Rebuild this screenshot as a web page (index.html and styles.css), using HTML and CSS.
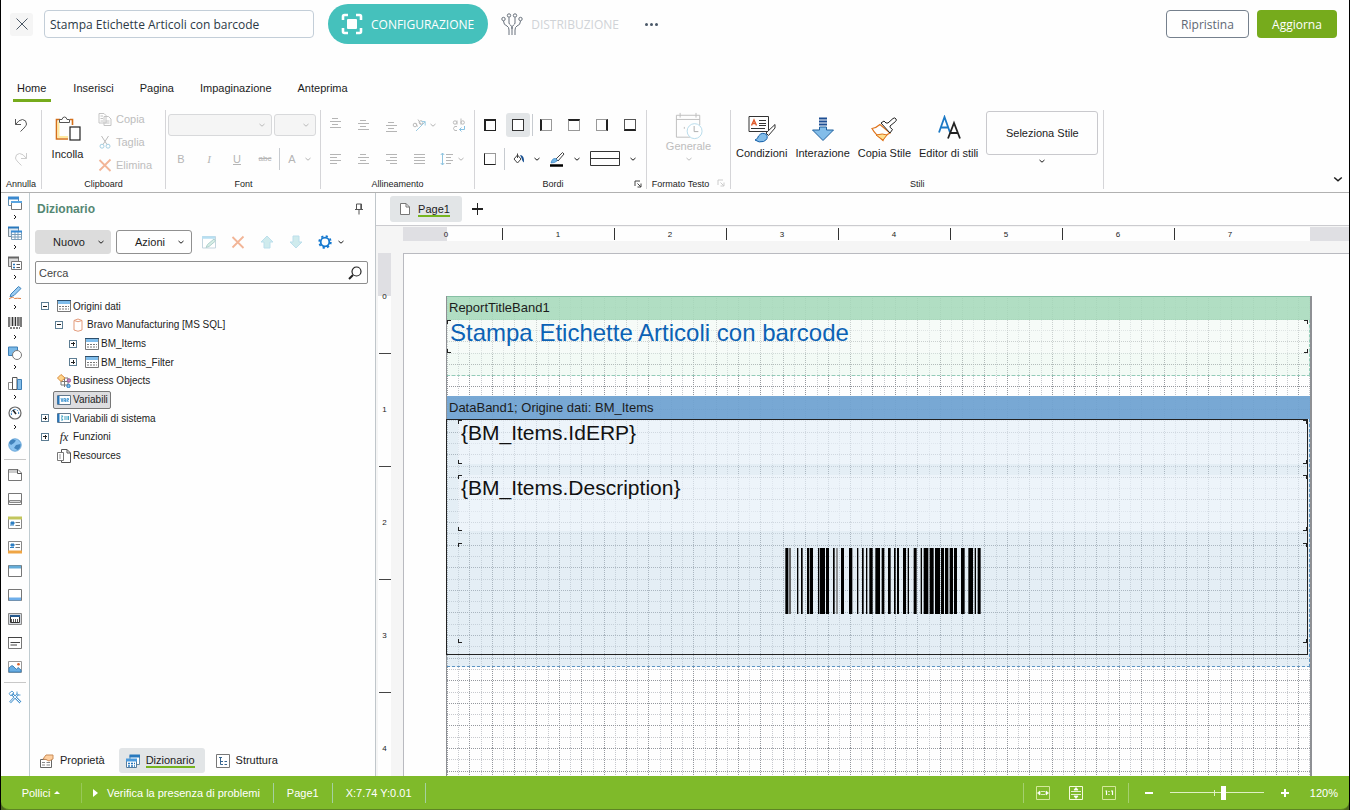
FILE: index.html
```
<!DOCTYPE html>
<html lang="it">
    <head>
        <meta charset="UTF-8">
        <meta name="viewport" content="width=device-width, initial-scale=1.0">
        <title>Stampa Etichette Articoli con barcode</title>
        <link rel="stylesheet" href="styles.css">
    </head>
    <body>

        <!-- icons -->
        <svg class="sprite" aria-hidden="true">
            <symbol id="chev" viewBox="0 0 8 8"><path d="M1.500 3L4 5.200L6.500 3" fill="none" stroke="currentColor"/></symbol>
            <symbol id="chev-right" viewBox="0 0 8 8"><path d="M3 2L5 4L3 6" fill="none" stroke="currentColor"/></symbol>
            <symbol id="close" viewBox="0 0 12 12"><path d="M.5 .5L11.5 11.5M11.5 .5L.5 11.5" stroke="#4c5866" fill="none"/></symbol>
            <symbol id="target" viewBox="0 0 22 22"><path d="M2 7V3.500Q2 2 3.500 2H7M15 2H18.500Q20 2 20 3.500V7M20 15V18.500Q20 20 18.500 20H15M7 20H3.500Q2 20 2 18.500V15" fill="none" stroke="#fff" stroke-width="2.600"/><rect x="6" y="6" width="10" height="10" rx="1" fill="#fff"/></symbol>
            <symbol id="nodes" viewBox="0 0 22 22"><g fill="none" stroke="#68717c"><circle cx="2.500" cy="6" r="1.700"/><circle cx="8" cy="2.500" r="1.700"/><circle cx="14" cy="2.500" r="1.700"/><circle cx="19.500" cy="6" r="1.700"/><path d="M2.500 8Q2.500 12 6 13Q8 14 8 17V22M8 4.500V10Q8 11 9.500 12Q11 13 11 16V22M14 4.500V10Q14 11 12.500 12Q11 13 11 16M19.500 8Q19.500 12 16 13Q14 14 14 17V22"/></g></symbol>
            <symbol id="undo" viewBox="0 0 16 16"><path d="M2.500 2V7.500H8M2.500 7.500Q6 2.500 9.500 2.500Q13.500 3 13.500 7Q13.500 9 7.500 14.500" fill="none" stroke="#555"/></symbol>
            <symbol id="redo" viewBox="0 0 16 16"><path d="M13.500 2V7.500H8M13.500 7.500Q10 2.500 6.500 2.500Q2.500 3 2.500 7Q2.500 9 8.500 14.500" fill="none" stroke="#ccc"/></symbol>
            <symbol id="paste" viewBox="0 0 28 28"><path d="M6 4.500H2.500V24H14M16 4.500H18.500V10" fill="none" stroke="#d5701a" stroke-width="1.600"/><path d="M4.500 6.500V22H14" fill="none" stroke="#ffe9a0" stroke-width="2"/><path d="M5.500 7.500V4.500H8Q8.500 2 10.500 2Q12.500 2 13 4.500H15.500V7.500Z" fill="#fff" stroke="#555"/><rect x="16" y="12" width="10" height="13" fill="#fff" stroke="#222" stroke-width="1.200"/></symbol>
            <symbol id="copy" viewBox="0 0 14 14"><path d="M1 1.500H6L8 3.500V11H1ZM6 4.500H10.500L13 7V13.500H6Z" fill="#fff" stroke="#c4c4c4"/><path d="M2.500 4H5M2.500 6.500H5M2.500 9H5M7.500 9H11.500M7.500 11H11.500" stroke="#c4c4c4"/></symbol>
            <symbol id="cut" viewBox="0 0 14 14"><path d="M3.500 1L9 9.500M10.500 1L5 9.500" stroke="#bbb" fill="none"/><circle cx="4" cy="11.200" r="2" fill="none" stroke="#a5cfe2"/><circle cx="10" cy="11.200" r="2" fill="none" stroke="#a5cfe2"/></symbol>
            <symbol id="delete" viewBox="0 0 14 14"><path d="M1.500 2L12.500 13M12.500 1.500L1.500 12.500" stroke="#f2b597" stroke-width="1.800" fill="none"/></symbol>
            <symbol id="lines-c" viewBox="0 0 12 12"><path d="M3 1.500H9M1 4.500H12M3 7.500H9M1 10.500H12" stroke="#b5b5b5"/></symbol>
            <symbol id="lines-l" viewBox="0 0 12 12"><path d="M1 1.500H12M1 4.500H8M1 7.500H12M1 10.500H8" stroke="#b5b5b5"/></symbol>
            <symbol id="lines-r" viewBox="0 0 12 12"><path d="M1 1.500H12M5 4.500H12M1 7.500H12M5 10.500H12" stroke="#b5b5b5"/></symbol>
            <symbol id="lines-j" viewBox="0 0 12 12"><path d="M1 1.500H12M1 4.500H12M1 7.500H12M1 10.500H12" stroke="#b5b5b5"/></symbol>
            <symbol id="angle" viewBox="0 0 14 14"><g fill="none" stroke="#bbb"><circle cx="3" cy="7" r="1.800"/><path d="M5.500 8.500L3.500 5M6 1.500L9 6.500"/><circle cx="9" cy="4.500" r="1.800"/></g><path d="M4 13L13 4M9.500 3.500H13.200V7.500" fill="none" stroke="#9ccbe2"/></symbol>
            <symbol id="spacing" viewBox="0 0 14 14"><path d="M6 2.500H13M6 5.500H11M6 8.500H13M6 11.500H11" stroke="#b5b5b5"/><path d="M2.500 1V13M.8 3L2.500 1L4.200 3M.8 11L2.500 13L4.200 11" fill="none" stroke="#8fc4e0"/></symbol>
            <symbol id="wrap" viewBox="0 0 14 14"><g fill="none" stroke="#bbb"><circle cx="3" cy="4.500" r="1.700"/><path d="M5 2.500V6.500M9 .5V6.500M5 8.500Q2 7.500 1.500 10.500Q2 13.500 5 12.500"/><circle cx="10.700" cy="4.500" r="1.700"/></g><path d="M12.500 8V11.500H7.500M9.500 9.500L7.500 11.500L9.500 13.500" fill="none" stroke="#86c1e2"/></symbol>
            <symbol id="bucket" viewBox="0 0 14 14"><path d="M5.500 1.500V6M5.500 3L2 7L5.500 11L9 7Z" fill="#fff" stroke="#444"/><path d="M8 3Q12.500 3 12 10.500Q10 9 9.500 6Z" fill="#174f91"/></symbol>
            <symbol id="pen" viewBox="0 0 16 16"><path d="M7 8L13.500 1.500L15 3L9 10Z" fill="#fff" stroke="#444"/><path d="M2 12Q3 7 6.500 7.500Q9 8.500 8 10Q6 12 2 12Z" fill="#72b5e6" stroke="#2677bd" stroke-width=".6"/><path d="M1 14.500H14" stroke="#000" stroke-width="2.500"/></symbol>
            <symbol id="linestyle" viewBox="0 0 32 18"><path d="M1.500 1.500H30.500V15.500H1.500ZM1 8.500H31" fill="none" stroke="#333"/></symbol>
            <symbol id="launcher" viewBox="0 0 8 8"><path d="M1 6V1H6M3.500 3.500L7 7M7 3.500V7H3.500" fill="none" stroke="currentColor"/></symbol>
            <symbol id="calendar" viewBox="0 0 30 30"><path d="M16 27H1.500V3.500H26.500V14M1.500 8H26.500M5.500 1V6M22.500 1V6" fill="none" stroke="#bcbcbc"/><path d="M10 16V18" stroke="#bbb"/><circle cx="21" cy="20.500" r="8" fill="#fff" stroke="#b4d9ea"/><path d="M20.500 15V21H25" fill="none" stroke="#aaa"/></symbol>
            <symbol id="cond" viewBox="0 0 28 28"><path d="M1 1.500H20.500V16.500H1Z" fill="#fff" stroke="#333"/><path d="M3.500 10.500L6 5L8.500 10.500M4.500 8.500H7.500" fill="none" stroke="#e05b2c" stroke-width="1.400"/><path d="M11 5.500H18M11 8.500H18M11 10.500H18M3 13.500H17" stroke="#333"/><path d="M18 18L27 9.500V13L20.500 20.500Z" fill="#fff" stroke="#333"/><path d="M7 25Q10 24 10.500 21Q14 16.500 18.500 19.500Q21 24 15.500 26.500Q11 28 7 25Z" fill="#83bde9" stroke="#155fa8"/></symbol>
            <symbol id="interact" viewBox="0 0 28 28"><path d="M10 3.500H18M10 6.500H18M10 9.500H18" stroke="#1d4e93" stroke-width="1.800"/><path d="M10.500 12H17.500V15H24.500L14 25.500L3.500 15H10.500Z" fill="#83bde9" stroke="#21629f"/></symbol>
            <symbol id="brush" viewBox="0 0 28 28"><path d="M10 9.500Q6 13 2 13.500Q5 19 13 25.500Q15 20 20 18Z" fill="#fff" stroke="#df741d" stroke-width="1.200"/><path d="M6 20Q13 18 17 20L13 25Z" fill="#ffdf91" stroke="#df741d"/><path d="M11 8L14 6Q16 9 18 8L23 3.500Q25 2 26 4Q27 5 25.500 6.500L20 11Q19 12 22.500 14.500L20 18Z" fill="#fff" stroke="#222"/></symbol>
            <symbol id="styles" viewBox="0 0 28 28"><path d="M4 17.500L9.500 2L15 17.500M6 12.500H13" fill="none" stroke="#1c79c5" stroke-width="1.800"/><path d="M13 23.500L19 8L25 23.500M15 18H23" fill="none" stroke="#222" stroke-width="1.800"/></symbol>
            <symbol id="pin" viewBox="0 0 10 12"><path d="M2.500 1H7.500V6.500H2.500ZM1 6.500H9M5 6.500V11.500" fill="none" stroke="#555"/><path d="M6.800 1V6" stroke="#555"/></symbol>
            <symbol id="edit" viewBox="0 0 14 14"><path d="M.5 1.500H13.500V13H.5Z" fill="#fff" stroke="#c5d5df"/><path d="M0 2.500H13" stroke="#b7dff2" stroke-width="2.500"/><path d="M4 12.500L5.500 9.500L12 4L13.500 6L7 11.500Z" fill="#d8eee6" stroke="#afd0cd"/></symbol>
            <symbol id="up" viewBox="0 0 14 14"><path d="M7 1L13 7H10V13H4V7H1Z" fill="#cfebed" stroke="#bcdfec"/></symbol>
            <symbol id="down" viewBox="0 0 14 14"><path d="M7 13L13 7H10V1H4V7H1Z" fill="#cfebed" stroke="#bcdfec"/></symbol>
            <symbol id="gear" viewBox="0 0 14 14"><circle cx="7" cy="7" r="4.300" fill="none" stroke="#1478cf" stroke-width="1.800"/><circle cx="7" cy="7" r="5.800" fill="none" stroke="#1478cf" stroke-width="1.800" stroke-dasharray="2.200 2.355"/></symbol>
            <symbol id="search" viewBox="0 0 14 14"><circle cx="8.500" cy="5.500" r="4.500" fill="none" stroke="#222" stroke-width="1.200"/><path d="M5 9L1 13" stroke="#222" stroke-width="2"/></symbol>

            <symbol id="windows" viewBox="0 0 14 14"><path d="M.5 1.500H10.500V9.500H.5Z" fill="#fff" stroke="#628cac"/><path d="M0 2H11" stroke="#3b89cf" stroke-width="3"/><path d="M3.500 5.500H13.500V13.500H3.500Z" fill="#fff" stroke="#777"/><path d="M3 6H14" stroke="#5aa5e0" stroke-width="2"/></symbol>
            <symbol id="tables" viewBox="0 0 14 14"><path d="M.5 1.500H10.500V10.500H.5Z" fill="#dde8f2" stroke="#7d8b95"/><path d="M0 1.500H11" stroke="#2878bd" stroke-width="2"/><path d="M3.500 5.500H13.500V13.500H3.500ZM4 8.500H13M4 11H13M7 6V13M10 6V13" fill="#fff" stroke="#7b9eb9"/><path d="M3 5.500H14" stroke="#378bd4" stroke-width="2"/></symbol>
            <symbol id="cards" viewBox="0 0 14 14"><path d="M.5 1.500H10.500V10.500H.5Z" fill="#ddd" stroke="#777"/><path d="M0 1.500H11" stroke="#666" stroke-width="2"/><path d="M3.500 5.500H13.500V13.500H3.500Z" fill="#fff" stroke="#777"/><path d="M5 8.500H7M5 11.500H7" stroke="#2677bd" stroke-width="1.500"/><path d="M8.500 8.500H12M8.500 11.500H12" stroke="#555"/></symbol>
            <symbol id="sign" viewBox="0 0 14 14"><path d="M3 8L10.500 .5L13 2.500L6 9.500L2 11Z" fill="#9cccf0" stroke="#3e83bc"/><path d="M1 13Q5 10 6.500 12.500Q9 12 13 12.500" stroke="#e08145" fill="none"/></symbol>
            <symbol id="bars" viewBox="0 0 14 14"><path d="M1 1V11M4.500 1V10M7.500 1V10M10 1V10M13 1V11" stroke="#333" stroke-width="1.300"/><path d="M3 1V10M6 1V10M11.500 1V10" stroke="#999"/><path d="M2 12H12" stroke="#555" stroke-width="1.500" stroke-dasharray="2 1"/></symbol>
            <symbol id="shapes" viewBox="0 0 14 14"><path d="M.5 1H9.500V9.500H.5Z" fill="#79b8e7" stroke="#3d7eb5"/><circle cx="9" cy="9" r="4.500" fill="#fff" stroke="#777"/></symbol>
            <symbol id="chart" viewBox="0 0 14 14"><path d="M.5 6.500H4.500V13.500H.5Z" fill="#fff" stroke="#888"/><path d="M4.500 1.500H9V13.500H4.500Z" fill="#fff" stroke="#555"/><path d="M9.500 3.500H13.500V13.500H9.500Z" fill="#83bde9" stroke="#3d7eb5"/></symbol>
            <symbol id="gauge" viewBox="0 0 14 14"><circle cx="7" cy="7" r="6" fill="#fff" stroke="#666" stroke-width="1.200"/><path d="M3.500 9Q2.500 4 7 3.500Q11.500 4 10.500 9" fill="none" stroke="#2878bd" stroke-dasharray="2 1"/><path d="M5 4L8 8" stroke="#222" stroke-width="1.500"/></symbol>
            <symbol id="globe" viewBox="0 0 14 14"><circle cx="7" cy="7" r="6.200" fill="#8cc4f0" stroke="#6aa6d8"/><path d="M1 5Q2 2 5 1.200L8 2.500L6 5L3 7ZM8 7L12.500 6Q13 10 9.500 12L6 10Z" fill="#4183bc"/></symbol>
            <symbol id="page-band" viewBox="0 0 14 14"><path d="M.5 1.500H10L13.500 5V12.500H.5Z" fill="#fff" stroke="#777"/><path d="M1 2H9V5H1Z" fill="#ccc"/><path d="M9.500 1.500V5.500H13.500" fill="none" stroke="#555"/></symbol>
            <symbol id="foot-band" viewBox="0 0 14 14"><path d="M.5 1.500H13.500V12.500H.5Z" fill="#fff" stroke="#777"/><path d="M1.500 8.500H12.500V10.500H1.500Z" fill="#ddd" stroke="#888"/></symbol>
            <symbol id="head-card" viewBox="0 0 14 14"><path d="M.5 1.500H13.500V12.500H.5Z" fill="#fff" stroke="#888"/><path d="M0 2H14" stroke="#c2c65d" stroke-width="3"/><path d="M3 6H6V8H3ZM2 9H6" fill="#2d7fc3" stroke="#2d7fc3"/><path d="M7.500 6.500H12M7.500 9.500H12" stroke="#777"/></symbol>
            <symbol id="foot-card" viewBox="0 0 14 14"><path d="M.5 1.500H13.500V12.500H.5Z" fill="#fff" stroke="#888"/><path d="M0 12H14" stroke="#efa544" stroke-width="3"/><path d="M3 4H6V6H3ZM2 7.500H6" fill="#2d7fc3" stroke="#2d7fc3"/><path d="M7.500 4.500H12M7.500 7.500H12" stroke="#777"/></symbol>
            <symbol id="top-band" viewBox="0 0 14 14"><path d="M.5 1.500H13.500V12.500H.5Z" fill="#fff" stroke="#777"/><path d="M1 3H13" stroke="#64acd8" stroke-width="3"/></symbol>
            <symbol id="bottom-band" viewBox="0 0 14 14"><path d="M.5 1.500H13.500V12.500H.5Z" fill="#fff" stroke="#777"/><path d="M1 11H13" stroke="#6eaeea" stroke-width="3"/></symbol>
            <symbol id="grid-band" viewBox="0 0 14 14"><path d="M.5 1.500H13.500V12.500H.5Z" fill="#d5d9de" stroke="#888"/><path d="M2.500 3.500H11.500V10.500H2.500Z" fill="#fff" stroke="#333"/><path d="M2 4H12" stroke="#25598d" stroke-width="2"/><path d="M3 8.500H11" stroke="#555" stroke-width="3" stroke-dasharray="1 1"/></symbol>
            <symbol id="text-band" viewBox="0 0 14 14"><path d="M.5 1.500H13.500V12.500H.5Z" fill="#fff" stroke="#777"/><path d="M0 1.500H14M2.500 6.500H12M2.500 9H9" stroke="#444"/></symbol>
            <symbol id="picture" viewBox="0 0 14 14"><path d="M.5 1.500H13.500V12.500H.5Z" fill="#fff" stroke="#999"/><path d="M1 12V8Q4 4 6 7L8.500 9.500L10 7.500L13 10V12Z" fill="#69aee3" stroke="#3f83ba"/><circle cx="10.500" cy="4.200" r="1.300" fill="#d6612d"/></symbol>
            <symbol id="tools" viewBox="0 0 14 14"><path d="M2 12.500L10 4M12.500 12.500L4 4" stroke="#4b94cd" stroke-width="2.500" fill="none"/><path d="M2 12.500L10 4M12.500 12.500L4 4" stroke="#fff" fill="none"/><path d="M9 1.500V5H12.500M1 3.500L4 1L6 3L3 6Z" fill="none" stroke="#5da1d4"/></symbol>

            <symbol id="table" viewBox="0 0 14 14"><path d="M.5 1.500H13.500V12.500H.5Z" fill="#fff" stroke="#777"/><path d="M0 1.500H14" stroke="#2b4f6e"/><path d="M1 3.500H13" stroke="#7fbdec" stroke-width="3"/><path d="M2 7.500H12M2 10H12" stroke="#777" stroke-dasharray="2 1"/></symbol>
            <symbol id="db" viewBox="0 0 14 14"><path d="M3 2.500V12Q7 14.500 11 12V2.500Q7 -.5 3 2.500Q7 5 11 2.500" fill="#fff" stroke="#e39b7b"/></symbol>
            <symbol id="objects" viewBox="0 0 14 14"><path d="M4 4H11V11H4ZM4 7.500H13M7.500 4V13" fill="none" stroke="#777"/><path d="M4 .5L8 4L4 7.500L.5 4Z" fill="#ffd58c" stroke="#d98b3d"/><circle cx="12" cy="6.500" r="1.700" fill="#cc8bc8" stroke="#9b5a9b"/><circle cx="11.500" cy="12" r="1.700" fill="#83bde9" stroke="#2d7fc3"/></symbol>
            <symbol id="var" viewBox="0 0 14 14"><path d="M.5 2.500H13.500V11.500H.5Z" fill="#fff" stroke="#63798d"/><path d="M1.500 3V11" stroke="#2677bd" stroke-width="2"/><path d="M4 5L5 9L6 5M7 9V5.500H8.500V9M7 7.500H8.500M10 9V5.500H11.500V7H10L11.500 9" fill="none" stroke="#55a0d5"/></symbol>
            <symbol id="sysvar" viewBox="0 0 14 14"><path d="M.5 2.500H13.500V11.500H.5Z" fill="#fff" stroke="#63798d"/><path d="M1.500 3V11" stroke="#2677bd" stroke-width="2"/><path d="M4 5H6L4.500 7L6 9H4M8 5V9M10 5V9M11.500 5V9" fill="none" stroke="#42a3c3"/></symbol>
            <symbol id="res" viewBox="0 0 14 14"><path d="M4.500 .5H10L13.500 4V13.500H4.500Z" fill="#fff" stroke="#555"/><path d="M10 .5V4H13.500" fill="none" stroke="#555"/><path d="M.5 3.500H6.500V11.500H.5Z" fill="#fff" stroke="#777"/><path d="M3 5V10" stroke="#999"/></symbol>
            <symbol id="props" viewBox="0 0 14 14"><path d="M.5 5.500H11.500V13.500H.5Z" fill="#fff" stroke="#666"/><path d="M2 8.500H5M2 11H5M6.500 8.500H10M6.500 11H10" stroke="#888"/><path d="M3 5L6 1H13V5L9 7L6 5.500Z" fill="#ffd0a0" stroke="#c98c58"/></symbol>
            <symbol id="dict" viewBox="0 0 14 14"><path d="M4 1.500H13.500V10.500H4Z" fill="#fff" stroke="#628cac"/><path d="M3.500 2H14" stroke="#2878bd" stroke-width="3"/><path d="M.5 5.500H10.500V13.500H.5Z" fill="#fff" stroke="#557c9c"/><path d="M0 6H11" stroke="#4a9add" stroke-width="3"/><path d="M2 9.500H9M2 12H9" stroke="#2878bd" stroke-width="1.500" stroke-dasharray="2 1"/></symbol>
            <symbol id="struct" viewBox="0 0 14 14"><path d="M.5 .5H13.500V13.500H.5Z" fill="#fff" stroke="#777"/><path d="M3 3.500H6M4.500 4V10.500H7M4.500 7.500H7M8.500 7.500H11M8.500 10.500H11" fill="none" stroke="#36658f"/></symbol>
            <symbol id="page" viewBox="0 0 12 14"><path d="M1.500 1.500H7L10.500 5V12.500H1.500Z" fill="#fff" stroke="#777"/><path d="M7 1.500V5H10.500" fill="none" stroke="#777"/></symbol>
            <symbol id="fit-width" viewBox="0 0 14 14"><path d="M.5 .5H13.500V13.500H.5Z" fill="none" stroke="#d3e89b"/><path d="M5 5.500H9M5 8.500H9M1.500 7L4 5V9ZM12.500 7L10 5V9Z" fill="#fff" stroke="#fff" stroke-width=".7"/></symbol>
            <symbol id="fit-page" viewBox="0 0 14 14"><path d="M.5 .5H13.500V13.500H.5Z" fill="none" stroke="#f5fbdc"/><path d="M2 5.500H12M2 8.500H12M7 1.500L9 4H5ZM7 12.500L9 10H5Z" fill="#fff" stroke="#fff" stroke-width=".8"/></symbol>
            <symbol id="fit-one" viewBox="0 0 14 14"><path d="M.5 .5H13.500V13.500H.5Z" fill="none" stroke="#d3e89b"/><path d="M3.500 5H4.500V9M7 5V6M7 8V9M9 5H10.500V9" fill="none" stroke="#fff" stroke-width="1.200"/></symbol>
        </svg>

        <header class="topbar">
            <button class="close-button" aria-label="Chiudi"><svg><use href="#close"/></svg></button>
            <input class="report-name" type="text" aria-label="Nome report" value="Stampa Etichette Articoli con barcode">
            <button class="step step-active"><svg><use href="#target"/></svg>CONFIGURAZIONE</button>
            <button class="step"><svg><use href="#nodes"/></svg>DISTRIBUZIONE</button>
            <button class="more" aria-label="Altro"><i></i><i></i><i></i></button>
            <div class="top-actions">
                <button class="outline-button">Ripristina</button>
                <button class="green-button">Aggiorna</button>
            </div>
        </header>

        <nav class="ribbon-tabs">
            <a class="active" href="#home">Home</a>
            <a href="#inserisci">Inserisci</a>
            <a href="#pagina">Pagina</a>
            <a href="#impaginazione">Impaginazione</a>
            <a href="#anteprima">Anteprima</a>
        </nav>

        <section class="ribbon">
            <div class="group group-undo">
                <div class="group-body rows">
                    <div class="row"><button class="cell" aria-label="Annulla"><svg class="ic16"><use href="#undo"/></svg></button></div>
                    <div class="row"><button class="cell" aria-label="Ripeti"><svg class="ic16"><use href="#redo"/></svg></button></div>
                </div>
                <div class="group-label">Annulla</div>
            </div>
            <div class="group group-clip">
                <div class="group-body">
                    <button class="big big-paste"><svg><use href="#paste"/></svg>Incolla</button>
                    <div class="clip-list">
                        <button><svg><use href="#copy"/></svg>Copia</button>
                        <button><svg><use href="#cut"/></svg>Taglia</button>
                        <button><svg><use href="#delete"/></svg>Elimina</button>
                    </div>
                </div>
                <div class="group-label">Clipboard</div>
            </div>
            <div class="group group-font">
                <div class="group-body rows">
                    <div class="row font-selects">
                        <select class="font-name" aria-label="Carattere" disabled></select>
                        <select class="font-size" aria-label="Dimensione" disabled></select>
                    </div>
                    <div class="row disabled">
                        <button class="cell">B</button>
                        <button class="cell italic">I</button>
                        <button class="cell underline">U</button>
                        <button class="cell strike">abc</button>
                        <span class="sep"></span>
                        <button class="cell narrow" aria-label="Colore testo">A</button>
                        <svg class="chev"><use href="#chev"/></svg>
                    </div>
                </div>
                <div class="group-label">Font</div>
            </div>
            <div class="group group-align">
                <div class="group-body rows">
                    <div class="row disabled">
                        <button class="cell cell-top" aria-label="In alto"><svg class="ic12"><use href="#lines-c"/></svg></button>
                        <button class="cell" aria-label="Al centro"><svg class="ic12"><use href="#lines-c"/></svg></button>
                        <button class="cell cell-bottom" aria-label="In basso"><svg class="ic12"><use href="#lines-c"/></svg></button>
                        <button class="cell" aria-label="Angolo"><svg class="ic14"><use href="#angle"/></svg></button>
                        <svg class="chev tight"><use href="#chev"/></svg>
                        <button class="cell cell-end" aria-label="A capo"><svg class="ic14"><use href="#wrap"/></svg></button>
                    </div>
                    <div class="row disabled">
                        <button class="cell" aria-label="Sinistra"><svg class="ic12"><use href="#lines-l"/></svg></button>
                        <button class="cell" aria-label="Centro"><svg class="ic12"><use href="#lines-c"/></svg></button>
                        <button class="cell" aria-label="Destra"><svg class="ic12"><use href="#lines-r"/></svg></button>
                        <button class="cell" aria-label="Giustifica"><svg class="ic12"><use href="#lines-j"/></svg></button>
                        <button class="cell" aria-label="Interlinea"><svg class="ic14"><use href="#spacing"/></svg></button>
                        <svg class="chev tight"><use href="#chev"/></svg>
                    </div>
                </div>
                <div class="group-label">Allineamento</div>
            </div>
            <div class="group group-border">
                <div class="group-body rows">
                    <div class="row">
                        <button class="cell" aria-label="Tutti"><i class="box all"></i></button>
                        <button class="cell selected" aria-label="Nessuno"><i class="box none"></i></button>
                        <button class="cell divided" aria-label="Sinistro"><i class="box left"></i></button>
                        <button class="cell" aria-label="Superiore"><i class="box top"></i></button>
                        <button class="cell" aria-label="Destro"><i class="box right"></i></button>
                        <button class="cell" aria-label="Inferiore"><i class="box bottom"></i></button>
                    </div>
                    <div class="row">
                        <button class="cell" aria-label="Ombra"><i class="box shadow"></i></button>
                        <span class="sep"></span>
                        <button class="cell" aria-label="Riempimento"><svg class="ic14"><use href="#bucket"/></svg></button>
                        <svg class="chev"><use href="#chev"/></svg>
                        <button class="cell cell-pen" aria-label="Colore bordo"><svg class="ic16"><use href="#pen"/></svg></button>
                        <svg class="chev"><use href="#chev"/></svg>
                        <button class="cell cell-line" aria-label="Stile bordo"><svg><use href="#linestyle"/></svg></button>
                        <svg class="chev"><use href="#chev"/></svg>
                    </div>
                </div>
                <div class="group-label">Bordi<svg class="launcher"><use href="#launcher"/></svg></div>
            </div>
            <div class="group group-format">
                <div class="group-body">
                    <button class="big big-format"><svg><use href="#calendar"/></svg>Generale<svg class="chev"><use href="#chev"/></svg></button>
                </div>
                <div class="group-label with-launcher">Formato Testo<svg class="launcher off"><use href="#launcher"/></svg></div>
            </div>
            <div class="group group-styles">
                <div class="group-body">
                    <button class="big"><svg><use href="#cond"/></svg>Condizioni</button>
                    <button class="big"><svg><use href="#interact"/></svg>Interazione</button>
                    <button class="big"><svg><use href="#brush"/></svg>Copia Stile</button>
                    <button class="big"><svg><use href="#styles"/></svg>Editor di stili</button>
                    <div class="style-pick">
                        <button class="style-box">Seleziona Stile</button>
                        <svg class="chev"><use href="#chev"/></svg>
                    </div>
                </div>
                <div class="group-label">Stili</div>
            </div>
            <button class="collapse" aria-label="Comprimi"><svg><use href="#chev"/></svg></button>
        </section>

        <main class="workspace">
            <aside class="toolbox">
                <button class="tool more-tool" aria-label="Bande"><svg><use href="#windows"/></svg><svg class="chev"><use href="#chev-right"/></svg></button>
                <button class="tool more-tool" aria-label="Tabelle"><svg><use href="#tables"/></svg><svg class="chev"><use href="#chev-right"/></svg></button>
                <button class="tool more-tool" aria-label="Componenti"><svg><use href="#cards"/></svg><svg class="chev"><use href="#chev-right"/></svg></button>
                <button class="tool more-tool" aria-label="Firme"><svg><use href="#sign"/></svg><svg class="chev"><use href="#chev-right"/></svg></button>
                <button class="tool more-tool" aria-label="Codici a barre"><svg><use href="#bars"/></svg><svg class="chev"><use href="#chev-right"/></svg></button>
                <button class="tool more-tool" aria-label="Forme"><svg><use href="#shapes"/></svg><svg class="chev"><use href="#chev-right"/></svg></button>
                <button class="tool more-tool" aria-label="Grafici"><svg><use href="#chart"/></svg><svg class="chev"><use href="#chev-right"/></svg></button>
                <button class="tool more-tool" aria-label="Indicatori"><svg><use href="#gauge"/></svg><svg class="chev"><use href="#chev-right"/></svg></button>
                <button class="tool tool-map" aria-label="Mappe"><svg><use href="#globe"/></svg></button>
                <hr>
                <button class="tool" aria-label="Titolo report"><svg><use href="#page-band"/></svg></button>
                <button class="tool" aria-label="Riepilogo"><svg><use href="#foot-band"/></svg></button>
                <button class="tool" aria-label="Intestazione pagina"><svg><use href="#head-card"/></svg></button>
                <button class="tool" aria-label="Piede pagina"><svg><use href="#foot-card"/></svg></button>
                <button class="tool" aria-label="Intestazione"><svg><use href="#top-band"/></svg></button>
                <button class="tool" aria-label="Piede"><svg><use href="#bottom-band"/></svg></button>
                <button class="tool" aria-label="Dati"><svg><use href="#grid-band"/></svg></button>
                <button class="tool" aria-label="Testo"><svg><use href="#text-band"/></svg></button>
                <button class="tool" aria-label="Immagine"><svg><use href="#picture"/></svg></button>
                <hr class="last">
                <button class="tool" aria-label="Strumenti"><svg><use href="#tools"/></svg></button>
            </aside>

            <section class="panel">
                <div class="panel-title">
                    <h2>Dizionario</h2>
                    <svg><use href="#pin"/></svg>
                </div>
                <div class="panel-tools">
                    <button class="drop drop-new">Nuovo<svg class="chev"><use href="#chev"/></svg></button>
                    <button class="drop">Azioni<svg class="chev"><use href="#chev"/></svg></button>
                    <div class="panel-icons">
                        <button aria-label="Modifica"><svg><use href="#edit"/></svg></button>
                        <button aria-label="Elimina"><svg><use href="#delete"/></svg></button>
                        <button aria-label="Su"><svg><use href="#up"/></svg></button>
                        <button aria-label="Giù"><svg><use href="#down"/></svg></button>
                        <button aria-label="Impostazioni"><svg><use href="#gear"/></svg></button>
                    </div>
                    <svg class="chev"><use href="#chev"/></svg>
                </div>
                <div class="search">
                    <input type="text" placeholder="Cerca" aria-label="Cerca">
                    <svg><use href="#search"/></svg>
                </div>
                <ul class="tree">
                    <li><span class="toggle minus"></span><span class="node"><svg><use href="#table"/></svg>Origini dati</span></li>
                    <li class="level-1"><span class="toggle minus"></span><span class="node"><svg><use href="#db"/></svg>Bravo Manufacturing [MS SQL]</span></li>
                    <li class="level-2"><span class="toggle plus"></span><span class="node"><svg><use href="#table"/></svg>BM_Items</span></li>
                    <li class="level-2"><span class="toggle plus"></span><span class="node"><svg><use href="#table"/></svg>BM_Items_Filter</span></li>
                    <li><span class="toggle empty"></span><span class="node"><svg><use href="#objects"/></svg>Business Objects</span></li>
                    <li><span class="toggle empty"></span><span class="node current"><svg><use href="#var"/></svg>Variabili</span></li>
                    <li><span class="toggle plus"></span><span class="node"><svg><use href="#sysvar"/></svg>Variabili di sistema</span></li>
                    <li><span class="toggle plus"></span><span class="node"><em>fx</em>Funzioni</span></li>
                    <li><span class="toggle empty"></span><span class="node"><svg><use href="#res"/></svg>Resources</span></li>
                </ul>
                <div class="panel-tabs">
                    <button><svg><use href="#props"/></svg><span>Proprietà</span></button>
                    <button class="active"><svg><use href="#dict"/></svg><span>Dizionario</span></button>
                    <button><svg><use href="#struct"/></svg><span>Struttura</span></button>
                </div>
            </section>

            <section class="designer">
                <div class="page-tabs">
                    <button class="page-tab"><svg><use href="#page"/></svg><span>Page1</span></button>
                    <button class="add-page" aria-label="Aggiungi pagina"></button>
                </div>
                <div class="ruler-h">
                    <div class="scale">
                        <span>0</span><i></i><span>1</span><i></i><span>2</span><i></i><span>3</span><i></i><span>4</span><i></i><span>5</span><i></i><span>6</span><i></i><span>7</span>
                    </div>
                </div>
                <div class="sheet">
                    <div class="ruler-v">
                        <div class="scale">
                            <span>0</span><i></i><span>1</span><i></i><span>2</span><i></i><span>3</span><i></i><span>4</span>
                        </div>
                    </div>
                    <div class="paper">
                        <div class="canvas">
                            <svg class="grid" width="100%" height="100%">
                                <defs>
                                    <!-- one inch, ten cells each way -->
                                    <pattern id="inch" width="112" height="113" patternUnits="userSpaceOnUse">
                                        <g fill="none" stroke-dasharray="1 1">
                                            <path stroke="#c6c8cd" d="M11.500 0V113M34.500 0V113M56.500 0V113M78.500 0V113M101.500 0V113M0 11.500H112M0 34.500H112M0 57.500H112M0 79.500H112M0 102.500H112"/>
                                            <path stroke="#94979d" d="M.5 0V113M22.500 0V113M45.500 0V113M67.500 0V113M89.500 0V113M0 .5H112M0 23.500H112M0 45.500H112M0 68.500H112M0 90.500H112"/>
                                        </g>
                                    </pattern>
                                </defs>
                                <rect width="100%" height="100%" fill="url(#inch)"/>
                            </svg>
                            <div class="band title-band">
                                <div class="band-head">ReportTitleBand1</div>
                                <div class="band-body">
                                    <div class="item item-title">Stampa Etichette Articoli con barcode</div>
                                </div>
                            </div>
                            <div class="band data-band">
                                <div class="band-head">DataBand1; Origine dati: BM_Items</div>
                                <div class="band-body">
                                    <div class="selection">
                                        <div class="item item-code">{BM_Items.IdERP}</div>
                                        <div class="item item-desc">{BM_Items.Description}</div>
                                        <div class="item item-barcode">
                                            <svg viewBox="135 54 588 198" preserveAspectRatio="none" role="img" aria-label="Codice a barre">
                                                <path d="M136 54h9v198h-9zM171 54h4v198h-4zM183 54h5v198h-5zM201 54h6v198h-6zM209 54h10v198h-10zM234 54h4v198h-4zM240 54h15v198h-15zM258 54h9v198h-9zM279 54h5v198h-5zM303 54h9v198h-9zM327 54h10v198h-10zM351 54h4v198h-4zM366 54h5v198h-5zM378 54h4v198h-4zM388 54h10v198h-10zM406 54h14v198h-14zM425 54h8v198h-8zM444 54h8v198h-8zM462 54h5v198h-5zM471 54h6v198h-6zM489 54h9v198h-9zM503 54h4v198h-4zM521 54h9v198h-9zM542 54h4v198h-4zM551 54h14v198h-14zM569 54h12v198h-12zM585 54h15v198h-15zM603 54h9v198h-9zM615 54h10v198h-10zM629 54h10v198h-10zM642 54h9v198h-9zM663 54h11v198h-11zM685 54h14v198h-14zM704 54h4v198h-4zM713 54h9v198h-9z"/>
                                                <path fill="#666" d="M147 54h6v198h-6zM289 54h4v198h-4z"/>
                                            </svg>
                                        </div>
                                    </div>
                                </div>
                            </div>
                        </div>
                    </div>
                </div>
            </section>
        </main>

        <footer class="statusbar">
            <button class="units">Pollici<i class="tri-up"></i></button>
            <button class="check"><i class="tri-right"></i>Verifica la presenza di problemi</button>
            <span class="status-item">Page1</span>
            <span class="status-item">X:7.74 Y:0.01</span>
            <div class="zoom">
                <div class="fit">
                    <button aria-label="Larghezza pagina"><svg><use href="#fit-width"/></svg></button>
                    <button aria-label="Pagina intera"><svg><use href="#fit-page"/></svg></button>
                    <button aria-label="Dimensione reale"><svg><use href="#fit-one"/></svg></button>
                </div>
                <button class="zoom-step minus" aria-label="Riduci"></button>
                <input type="range" min="0" max="100" value="57" aria-label="Zoom">
                <button class="zoom-step plus" aria-label="Ingrandisci"></button>
                <span class="zoom-value">120%</span>
            </div>
        </footer>

    </body>
</html>
```
FILE: styles.css
```
* {
    box-sizing: border-box;
}

html {
    background-color: #000;
}

body {
    display: flex;
    flex-direction: column;
    height: 100vh;
    margin: 0;
    border: solid #000;
    border-width: 0 1px;
    overflow: hidden;
    background-color: #fefefe;
    color: #1c1c1c;
    font-family: "Liberation Sans", Arial, sans-serif;
    font-size: 11px;
}

button,
input,
select {
    margin: 0;
    padding: 0;
    border: none;
    background: none;
    color: inherit;
    font: inherit;
}

button {
    display: flex;
    align-items: center;
    justify-content: center;
    cursor: pointer;
}

svg {
    display: block;
    flex: none;
}

.sprite {
    position: absolute;
    width: 0;
    height: 0;
}

.chev {
    width: 8px;
    height: 8px;
}

.ic12 {
    width: 12px;
    height: 12px;
}

.ic14 {
    width: 14px;
    height: 14px;
}

.ic16 {
    width: 16px;
    height: 16px;
}

/* top bar */

.topbar {
    display: flex;
    align-items: center;
    flex: none;
    height: 48px;
    margin-bottom: 30px;
    padding: 0 12px 0 9px;
    font-family: "Open Sans", sans-serif;
    font-size: 12px;
}

.close-button {
    width: 23px;
    height: 23px;
    margin-right: 11px;
    border-radius: 3px;
    background-color: #f5f5f5;
}

.close-button svg {
    width: 12px;
    height: 12px;
}

.report-name {
    width: 270px;
    height: 28px;
    margin-right: 14px;
    padding: 0 5px;
    border: 1px solid #c3ced8;
    border-radius: 4px;
    color: #2c3a47;
}

.step {
    gap: 8px;
    height: 40px;
    margin-right: 13px;
    color: #d0d3d7;
    white-space: nowrap;
}

.step svg {
    width: 22px;
    height: 22px;
}

.step-active {
    padding: 0 14px 0 13px;
    border-radius: 20px;
    background-color: #45c1bc;
    color: #fff;
}

.more {
    gap: 2px;
    margin-left: 13px;
}

.more i {
    width: 3px;
    height: 3px;
    border-radius: 50%;
    background-color: #4a5868;
}

.top-actions {
    display: flex;
    gap: 8px;
    margin-left: auto;
}

.outline-button,
.green-button {
    height: 28px;
    border-radius: 4px;
}

.outline-button {
    width: 83px;
    border: 1px solid #75808d;
    color: #5f6874;
}

.green-button {
    width: 80px;
    background-color: #76ab1c;
    color: #fff;
}

/* ribbon */

.ribbon-tabs {
    display: flex;
    flex: none;
    gap: 18px;
    height: 32px;
    padding-left: 12px;
}

.ribbon-tabs a {
    height: 24px;
    padding: 4px 4px 0;
    border-bottom: 3px solid transparent;
    color: #1c1c1c;
    text-decoration: none;
}

.ribbon-tabs a.active {
    padding-right: 5px;
    border-color: #76ab1c;
}

.ribbon {
    display: flex;
    flex: none;
    height: 83px;
    padding-bottom: 3px;
    border-bottom: 1px solid #b1b1b1;
}

.group {
    display: flex;
    flex-direction: column;
    flex: none;
    border-right: 1px solid #d5d5d8;
}

.group-body {
    display: flex;
    flex: 1;
}

.group-label {
    display: flex;
    justify-content: center;
    height: 10px;
    font-size: 9px;
    line-height: 10px;
    white-space: nowrap;
}

.rows {
    flex-direction: column;
    gap: 5px;
}

.row {
    display: flex;
    align-items: center;
    height: 29px;
}

.cell {
    width: 28px;
    height: 24px;
}

.disabled {
    color: #b5b5b5;
}

.sep {
    width: 1px;
    height: 22px;
    background-color: #c7cbd0;
}

.group-undo {
    width: 41px;
}

.group-undo .row {
    justify-content: center;
}

.group-clip {
    width: 124px;
}

.big {
    flex-direction: column;
    justify-content: flex-start;
    gap: 4px;
    padding-top: 5px;
    white-space: nowrap;
}

.big svg {
    width: 28px;
    height: 28px;
}

.big-paste {
    gap: 5px;
    width: 51px;
}

.clip-list {
    display: flex;
    flex-direction: column;
    gap: 9px;
    padding: 2px 0 0 5px;
}

.clip-list button {
    justify-content: flex-start;
    gap: 4px;
    height: 14px;
    color: #bdbdbd;
}

.clip-list svg {
    width: 14px;
    height: 14px;
}

.group-font {
    width: 155px;
    padding-left: 1px;
}

.font-selects {
    gap: 2px;
    padding-left: 1px;
}

.font-selects select {
    height: 22px;
    border: 1px solid #d8d9db;
    border-radius: 3px;
    opacity: 1;
    appearance: none;
    background: #f5f5f5 url("data:image/svg+xml,%3Csvg xmlns='http://www.w3.org/2000/svg' width='8' height='8'%3E%3Cpath d='M1.500 3L4 5.200L6.500 3' fill='none' stroke='%23bbb'/%3E%3C/svg%3E") no-repeat right 5px center;
}

.font-name {
    width: 104px;
}

.font-size {
    width: 42px;
}

.italic {
    font-family: "Liberation Serif", serif;
    font-style: italic;
}

.underline {
    text-decoration: underline;
}

.strike {
    font-size: 8px;
    text-decoration: line-through;
}

.narrow {
    width: 24px;
}

.group-align {
    width: 154px;
}

.tight {
    margin: 0 -4px;
}

.cell-top {
    padding-bottom: 4px;
}

.cell-bottom {
    padding-top: 4px;
}

.cell-end {
    margin-left: 12px;
}

.group-border {
    width: 172px;
}

.group-border .row {
    padding-left: 1px;
}

.group-border .cell.selected {
    width: 24px;
    margin: 0 2px;
    border-radius: 3px;
    background-color: #e2e5e7;
}

.divided {
    background: linear-gradient(#c7cbd0, #c7cbd0) left / 1px 22px no-repeat;
}

.box {
    width: 12px;
    height: 12px;
    border: 1px solid #999;
}

.box.all {
    border: 1px solid #222;
    border-top-width: 2px;
    border-left-width: 2px;
}

.box.none {
    border-color: #333;
    background-color: #fff;
}

.box.left {
    border-left: 2px solid #222;
}

.box.top {
    border-top: 2px solid #222;
}

.box.right {
    border-right: 2px solid #222;
}

.box.bottom {
    border-color: #555;
    border-bottom: 2px solid #222;
}

.box.shadow {
    border-left-color: #222;
    border-bottom-color: #222;
}

.group-border .cell-pen {
    width: 32px;
}

.group-border .cell-line {
    width: 48px;
}

.cell-line svg {
    width: 32px;
    height: 18px;
}

.group-border .group-label {
    position: relative;
    padding-right: 15px;
}

.launcher {
    width: 8px;
    height: 8px;
    color: #444;
}

.launcher.off {
    color: #ccc;
}

.group-border .launcher {
    position: absolute;
    right: 4px;
    top: 1px;
}

.with-launcher {
    gap: 8px;
}

.group-format {
    width: 84px;
}

.big-format {
    flex: 1;
    gap: 0;
    padding-top: 2px;
    color: #bdbdbd;
}

.big-format svg {
    width: 30px;
    height: 28px;
}

.big-format .chev {
    width: 8px;
    height: 8px;
    margin-top: 3px;
}

.group-styles .group-body {
    gap: 8px;
    padding: 0 5px;
}

.style-pick {
    display: flex;
    flex-direction: column;
    align-items: center;
    padding-top: 1px;
}

.style-box {
    width: 112px;
    height: 44px;
    margin-bottom: 2px;
    border: 1px solid #c9c9cd;
    border-radius: 3px;
}

.collapse {
    align-self: flex-end;
    margin: 0 5px 4px auto;
}

.collapse svg {
    width: 12px;
    height: 12px;
}

/* workspace */

.workspace {
    display: flex;
    flex: 1;
    min-height: 0;
}

.toolbox {
    display: flex;
    flex-direction: column;
    align-items: center;
    width: 29px;
    padding-top: 3px;
    border-right: 1px solid #c0ccd1;
}

.tool {
    flex-direction: column;
    flex: none;
    width: 28px;
    height: 24px;
}

.tool svg {
    width: 14px;
    height: 14px;
}

.more-tool {
    gap: 3px;
    justify-content: flex-start;
    height: 30px;
}

.tool .chev {
    width: 8px;
    height: 8px;
}

.tool-map {
    height: 18px;
}

.toolbox hr {
    width: 22px;
    height: 1px;
    margin: 5px 0 3px;
    border: none;
    background-color: #c8c8c8;
}

.toolbox .last {
    margin: 3px 0 2px;
}

.panel {
    display: flex;
    flex-direction: column;
    width: 346px;
    padding: 0 7px 0 5px;
    border-right: 1px solid #c0c6ca;
}

.panel-title {
    display: flex;
    align-items: center;
    justify-content: space-between;
    height: 32px;
    padding: 0 4px 0 2px;
}

.panel-title h2 {
    margin: 0;
    color: #548773;
    font-size: 12px;
}

.panel-title svg {
    width: 10px;
    height: 12px;
}

.panel-tools {
    display: flex;
    align-items: center;
    gap: 5px;
    height: 34px;
}

.drop {
    gap: 12px;
    width: 76px;
    height: 24px;
    padding-left: 12px;
    border: 1px solid #909090;
    border-radius: 3px;
}

.drop-new {
    border-color: #dcdcdc;
    background-color: #dcdcdc;
}

.panel-icons {
    display: flex;
    gap: 15px;
    margin-left: 5px;
}

.panel-icons svg {
    width: 14px;
    height: 14px;
}

.search {
    display: flex;
    align-items: center;
    height: 23px;
    margin-top: 2px;
    padding: 0 5px 0 3px;
    border: 1px solid #8e8e8e;
    border-radius: 2px;
}

.search input {
    flex: 1;
    outline: none;
}

.search input::placeholder {
    color: #444;
}

.search svg {
    width: 14px;
    height: 14px;
}

.tree {
    display: grid;
    height: 168px;
    margin: 13px 0 0;
    padding: 0 0 0 6px;
    list-style: none;
    font-size: 10px;
}

.tree li {
    display: flex;
    align-items: center;
    gap: 4px;
    min-height: 0;
}

.level-1 {
    padding-left: 14px;
}

.level-2 {
    padding-left: 28px;
}

.toggle {
    width: 8px;
    height: 8px;
    border: 1px solid #5d7d93;
    background: linear-gradient(#222, #222) center / 4px 1px no-repeat;
}

.toggle.plus {
    background: linear-gradient(#222, #222) center / 4px 1px no-repeat,
        linear-gradient(#222, #222) center / 1px 4px no-repeat;
}

.toggle.empty {
    visibility: hidden;
}

.node {
    display: flex;
    align-items: center;
    gap: 2px;
    padding: 1px 2px 1px 3px;
    border: 1px solid transparent;
    border-radius: 2px;
}

.node.current {
    border-color: #777;
    background-color: #dddde0;
}

.node svg,
.node em {
    width: 14px;
    height: 14px;
}

.node em {
    font-family: "Liberation Serif", serif;
    font-size: 12px;
    line-height: 14px;
    text-align: center;
}

.panel-tabs {
    display: flex;
    align-items: center;
    gap: 4px;
    margin: auto 0 3px;
}

.panel-tabs button {
    gap: 6px;
    height: 25px;
    padding: 0 10px 0 7px;
    border-radius: 3px;
}

.panel-tabs button:first-child {
    padding-left: 5px;
}

.panel-tabs .active,
.page-tab {
    background-color: #e2e5e7;
}

.panel-tabs svg {
    width: 14px;
    height: 14px;
}

.panel-tabs span,
.page-tab span {
    padding-top: 1px;
    border-bottom: 2px solid transparent;
}

.panel-tabs .active span,
.page-tab span {
    border-color: #76b51f;
}

/* designer */

.designer {
    display: flex;
    flex-direction: column;
    flex: 1;
    min-width: 0;
    background-color: #f5f5f5;
}

.page-tabs {
    display: flex;
    align-items: center;
    flex: none;
    gap: 10px;
    height: 33px;
    padding-left: 14px;
    border-bottom: 1px solid #cbcbcf;
    background-color: #fefefe;
}

.page-tab {
    gap: 7px;
    width: 72px;
    height: 26px;
    padding-right: 3px;
    border-radius: 3px;
}

.page-tab svg {
    width: 12px;
    height: 14px;
}

.add-page {
    width: 11px;
    height: 12px;
    background: linear-gradient(#222, #222) center / 12px 2px no-repeat,
        linear-gradient(#222, #222) center / 1px 12px no-repeat;
}

.ruler-h {
    flex: none;
    height: 14px;
    margin: 1px 0 12px 27px;
    padding-left: 15px;
    border: solid #dfdfe3;
    border-width: 0 39px 0 0;
    background: linear-gradient(#dfdfe3, #dfdfe3) left / 44px 100% no-repeat #fefefe;
}

.scale {
    display: flex;
    font-size: 8px;
}

.ruler-h .scale {
    height: 14px;
}

.ruler-h span,
.ruler-h i {
    display: flex;
    align-items: center;
    justify-content: center;
    flex: none;
    width: 56px;
}

.ruler-h i::before {
    content: "";
    width: 1px;
    height: 12px;
    background-color: #333;
}

.sheet {
    display: flex;
    flex: 1;
    min-height: 0;
    overflow: hidden;
}

.ruler-v {
    width: 13px;
    margin: 0 12px 0 2px;
    padding-top: 15px;
    background: linear-gradient(#dfdfe3, #dfdfe3) top / 100% 43px no-repeat #fefefe;
}

.ruler-v .scale {
    flex-direction: column;
}

.ruler-v span,
.ruler-v i {
    display: flex;
    align-items: center;
    justify-content: center;
    height: 57px;
}

.ruler-v i {
    height: 56px;
}

.ruler-v i::before {
    content: "";
    width: 12px;
    height: 1px;
    background-color: #444;
}

.paper {
    display: flex;
    flex: 1;
    min-width: 0;
    padding: 42px 37px 0 42px;
    border: solid #b9bac0;
    border-width: 1px 0 0 1px;
    background-color: #fefefe;
}

.canvas {
    position: relative;
    flex: 1;
    min-width: 0;
    border: solid #8e9094;
    border-width: 0 2px 0 1px;
}

.grid {
    position: absolute;
    top: 0;
    left: 0;
}

.band {
    position: relative;
    margin-bottom: 20px;
    font-size: 13px;
}

.band-head {
    height: 24px;
    padding-left: 2px;
    line-height: 22px;
    white-space: nowrap;
}

.title-band .band-head {
    border-top: 1px solid #86c0a4;
    background-color: rgba(170, 219, 190, 0.92);
}

.title-band .band-body {
    height: 56px;
    border: dashed #92cdb9;
    border-width: 0 1px 1px 0;
    background-color: rgba(224, 244, 233, 0.4);
}

.data-band .band-head {
    height: 23px;
    line-height: 24px;
    background-color: rgba(113, 163, 210, 0.95);
}

.data-band .band-body {
    padding-bottom: 11px;
    border-bottom: 1px dashed #5b93c2;
    border-right: 1px dashed #5b93c2;
    background-color: rgba(198, 219, 234, 0.45);
}

.selection {
    display: flex;
    flex-direction: column;
    margin: 0 1px 0 -1px;
    padding: 0 0 11px 11px;
    border: 1px solid #222;
}

/* corner marks of the report items */
.item {
    --c: linear-gradient(#222, #222);
    background: var(--c) left top / 4px 1px, var(--c) left top / 1px 4px,
        var(--c) right top / 4px 1px, var(--c) right top / 1px 4px,
        var(--c) left bottom / 4px 1px, var(--c) left bottom / 1px 4px,
        var(--c) right bottom / 4px 1px, var(--c) right bottom / 1px 4px;
    background-repeat: no-repeat;
    background-color: rgba(246, 250, 255, 0.5);
    color: #111;
    font-size: 21px;
    line-height: 25px;
    white-space: nowrap;
}

.item-title {
    height: 33px;
    margin-right: 1px;
    padding-left: 3px;
    background-color: rgba(255, 255, 255, 0.3);
    color: #0b62b5;
    font-size: 24px;
    line-height: 26px;
}

.item-code {
    height: 44px;
    margin-bottom: 11px;
    padding-left: 3px;
}

.item-desc {
    height: 56px;
    margin-bottom: 12px;
    padding-left: 3px;
}

.item-barcode {
    display: flex;
    justify-content: center;
    height: 100px;
    padding-top: 5px;
    background-color: transparent;
}

.item-barcode svg {
    width: 196px;
    height: 66px;
}

/* status bar */

.statusbar {
    display: flex;
    align-items: center;
    flex: none;
    height: 34px;
    padding-right: 11px;
    border-bottom: 1px solid #5d8424;
    border-radius: 0 0 8px 8px;
    background-color: #7fba2a;
    box-shadow: 0 8px 0 #4d6b1f;
    color: #fff;
    white-space: nowrap;
}

.units,
.check,
.status-item {
    display: flex;
    align-items: center;
    height: 20px;
    border-right: 1px solid #a5d1a0;
}

.units {
    gap: 4px;
    width: 81px;
    border-color: #98c858;
}

.tri-up {
    border: 3px solid transparent;
    border-top: none;
    border-bottom-color: #fff;
}

.check {
    gap: 9px;
    padding: 0 13px 0 11px;
}

.tri-right {
    border: 4px solid transparent;
    border-right: none;
    border-left: 5px solid #fff;
}

.status-item {
    padding: 0 13px;
}

.zoom {
    display: flex;
    align-items: center;
    margin-left: auto;
}

.fit {
    display: flex;
    align-items: center;
    gap: 19px;
    height: 20px;
    margin-right: 16px;
    padding: 0 12px;
    border: solid #a5d070;
    border-width: 0 1px;
}

.fit svg {
    width: 14px;
    height: 14px;
}

.zoom-step {
    width: 8px;
    height: 8px;
    background: linear-gradient(#fff, #fff) center / 8px 2px no-repeat;
}

.zoom-step.plus {
    background: linear-gradient(#fff, #fff) center / 8px 2px no-repeat,
        linear-gradient(#fff, #fff) center / 2px 8px no-repeat;
}

.zoom input {
    width: 94px;
    height: 14px;
    margin: 0 17px;
    appearance: none;
    background: linear-gradient(#dff0c4, #dff0c4) center / 100% 1px no-repeat,
        linear-gradient(#dff0c4, #dff0c4) 44px center / 1px 6px no-repeat;
}

.zoom input::-webkit-slider-thumb {
    width: 5px;
    height: 14px;
    appearance: none;
    background-color: #fff;
}

.zoom-value {
    margin-left: 21px;
}
```
